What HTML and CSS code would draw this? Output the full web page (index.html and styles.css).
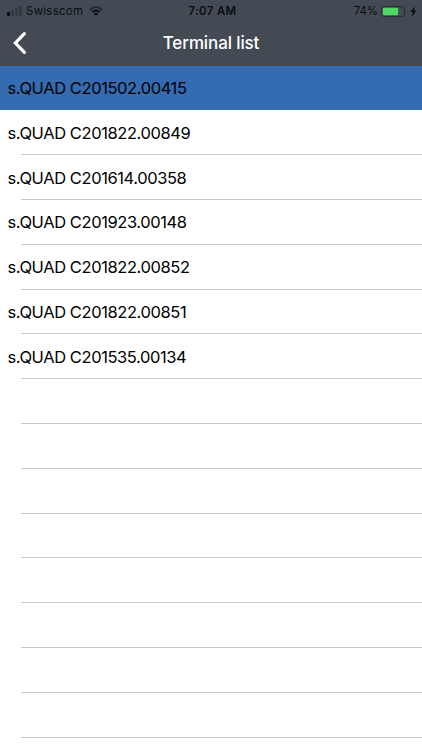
FILE: index.html
```html
<!DOCTYPE html>
<html lang="en">
<head>
<meta charset="utf-8">
<title>Terminal list</title>
<link rel="stylesheet" href="styles.css">
</head>
<body>
<header class="header">
  <div class="status">
    <div class="status-left">
      <span class="signal"><i class="on"></i><i></i><i></i><i></i></span>
      <span class="carrier">Swisscom</span>
      <svg class="wifi" width="14" height="10" viewBox="0 0 14 10" fill="none" stroke="#090c10" stroke-width="1.8"><path d="M1 3.8Q7-1.5 13 3.8" opacity=".6"/><path d="M3.3 6.1Q7 3 10.7 6.1"/><path d="M4.9 7.5Q7 5.8 9.1 7.5L7 9.7Z" fill="#090c10" stroke="none"/></svg>
    </div>
    <span class="time">7:07 AM</span>
    <div class="status-right">
      <span class="percent">74%</span>
      <svg class="battery" width="27" height="11" viewBox="0 0 27 11"><rect x=".6" y=".6" width="23" height="9.8" rx="2.4" fill="none" stroke="#252b33"/><rect x="1.8" y="1.8" width="15.4" height="7.4" rx="1" fill="#4cd964"/><path d="M24.9 3.7q1.4 1.8 0 3.6z" fill="#252b33"/></svg>
      <svg class="bolt" width="7" height="11" viewBox="0 0 7 11"><path d="M4.7.5.3 6.1h2.5L1.8 10.5 6.7 4.6H4z" fill="#090c10"/></svg>
    </div>
  </div>
  <nav class="nav">
    <svg class="back" width="16" height="24" viewBox="0 0 16 24" fill="none" stroke="#fff" stroke-width="3.2" stroke-linecap="round" stroke-linejoin="miter"><path d="M12.4 2.7 3.4 12l9 9.3"/></svg>
    <h1 class="title">Terminal list</h1>
  </nav>
</header>
<ul class="list">
  <li class="row selected"><span>s.QUAD C201502.00415</span></li>
  <li class="row"><span>s.QUAD C201822.00849</span></li>
  <li class="row"><span>s.QUAD C201614.00358</span></li>
  <li class="row"><span>s.QUAD C201923.00148</span></li>
  <li class="row"><span>s.QUAD C201822.00852</span></li>
  <li class="row"><span>s.QUAD C201822.00851</span></li>
  <li class="row"><span>s.QUAD C201535.00134</span></li>
  <li class="row"></li>
  <li class="row"></li>
  <li class="row"></li>
  <li class="row"></li>
  <li class="row"></li>
  <li class="row"></li>
  <li class="row"></li>
  <li class="row"></li>
</ul>
</body>
</html>
```
FILE: styles.css
```css
* { box-sizing: border-box; }
body { margin: 0; height: 750px; overflow: hidden; background: #fff; font-family: Inter, "Liberation Sans", sans-serif; color: #000; }
.header { height: 66px; background: #434a54; }
.status { display: grid; grid-template-columns: 1fr auto 1fr; align-items: center; height: 22px; padding: 0 5px 0 7px; font-size: 11.4px; line-height: 22px; color: #0b0e12; }
.status-left, .status-right { display: flex; align-items: center; }
.status-right { justify-content: flex-end; }
.signal { display: flex; align-items: flex-end; gap: 1px; width: 16px; height: 10px; margin-right: 3px; }
.signal i { width: 3px; height: 10px; border-radius: 1px; background: #333942; }
.signal i:nth-child(1) { height: 4px; background: #090c10; }
.signal i:nth-child(2) { height: 6px; }
.signal i:nth-child(3) { height: 8px; }
.carrier { letter-spacing: .32px; }
.wifi { margin-left: 6px; }
.time { margin-left: 1px; font-weight: 600; font-size: 11.4px; letter-spacing: .35px; }
.battery { margin-left: 3px; }
.bolt { margin-left: 2px; }
.nav { display: grid; grid-template-columns: 40px 1fr 40px; align-items: center; height: 42px; }
.back { margin-left: 12px; }
.title { margin: 0; text-align: center; font-size: 17px; font-weight: 550; letter-spacing: -.12px; line-height: 22px; color: #fff; }
.list { margin: 0; padding: 0; list-style: none; }
.row { display: flex; align-items: center; height: 44.8px; padding: 0 0 0 7.5px; font-size: 16.5px; letter-spacing: -.41px; background: linear-gradient(#c8c8cb, #c8c8cb) 21px 100% / 100% 1px no-repeat; }
.row.selected { height: 44px; margin-bottom: .5px; background: #356bb0; }
```
